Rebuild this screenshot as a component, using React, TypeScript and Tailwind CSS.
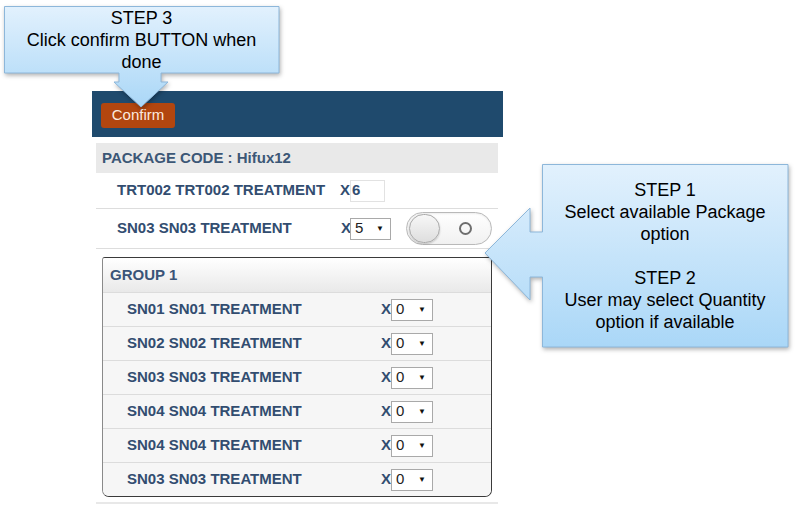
import React from "react";

const font = { fontFamily: '"Liberation Sans", Arial, sans-serif' };

function Select({ value, w }: { value: string; w: string }) {
  return (
    <div
      className={`flex h-[22px] items-center justify-between border border-[#a9a9a9] bg-white pl-[4px] pr-[6px] text-[15px] font-normal text-[#222] ${w}`}
    >
      <span>{value}</span>
      <span className="text-[8px] leading-none text-[#111]">▼</span>
    </div>
  );
}

function Toggle() {
  return (
    <div className="relative ml-[15px] flex h-[33px] w-[86px] items-center rounded-full border border-[#b9b9b9] bg-gradient-to-b from-[#ffffff] to-[#f1f1f1] shadow-[inset_0_1px_2px_rgba(0,0,0,0.08)]">
      <div className="ml-[2px] h-[29px] w-[31px] rounded-full border border-[#a8a8a8] bg-gradient-to-b from-[#f7f7f7] to-[#dedede] shadow-[0_1px_2px_rgba(0,0,0,0.2)]" />
      <div className="ml-[19px] h-[13px] w-[13px] rounded-full border-2 border-[#6e6e6e]" />
    </div>
  );
}

const groupRows = [
  "SN01 SN01 TREATMENT",
  "SN02 SN02 TREATMENT",
  "SN03 SN03 TREATMENT",
  "SN04 SN04 TREATMENT",
  "SN04 SN04 TREATMENT",
  "SN03 SN03 TREATMENT",
];

export default function App() {
  return (
    <div className="relative h-[509px] w-[798px] overflow-hidden bg-white" style={font}>
      <div className="pl-[92px] pt-[91px]">
        {/* header bar */}
        <div className="flex h-[46px] w-[411px] items-start bg-[#1f4a6d]">
          <div className="ml-[9px] mt-[12px] flex h-[25px] w-[74px] items-center justify-center rounded-[3px] bg-[#b2460f] text-[15px] text-[#fbeadf]">
            Confirm
          </div>
        </div>

        <div className="ml-[4px] w-[402px]">
          {/* package code */}
          <div className="mt-[6px] flex h-[30px] items-center bg-[#e9e9e9] pl-[6px] text-[15px] font-bold text-[#3c5776]">
            PACKAGE CODE : Hifux12
          </div>

          {/* TRT002 row */}
          <div className="flex h-[36px] items-center border-b border-[#dddddd] pl-[21px] text-[15px] font-bold text-[#324d70]">
            <span className="w-[223px]">TRT002 TRT002 TREATMENT</span>
            <span>X</span>
            <div className="flex h-[22px] w-[35px] items-center border border-[#e2e2e2] pl-[1px]">6</div>
          </div>

          {/* SN03 row */}
          <div className="flex h-[40px] items-center border-b border-[#dddddd] pl-[21px] text-[15px] font-bold text-[#324d70]">
            <span className="w-[224px]">SN03 SN03 TREATMENT</span>
            <span className="w-[9px]">X</span>
            <Select value="5" w="w-[41px]" />
            <Toggle />
          </div>

          {/* group */}
          <div className="ml-[6px] mt-[8px] w-[390px] overflow-hidden rounded-t-[3px] rounded-b-[7px] border border-[#3a3a3a] border-l-[#8a8a8a]">
            <div className="flex h-[34px] items-center bg-gradient-to-b from-[#ffffff] to-[#e9e9e9] pl-[7px] text-[15px] font-bold text-[#3a5478]">
              GROUP 1
            </div>
            {groupRows.map((r, i) => (
              <div
                key={i}
                className="flex h-[34px] items-center border-t border-[#dcdcdc] bg-[#f6f6f6] pl-[24px] text-[15px] font-bold text-[#324d70]"
              >
                <span className="w-[254px]">{r}</span>
                <span className="w-[10px]">X</span>
                <Select value="0" w="w-[42px]" />
              </div>
            ))}
          </div>

          <div className="mt-[5px] h-[2px] bg-[#e8e8e8]" />
        </div>
      </div>

      {/* STEP 3 callout */}
      <div className="absolute left-[4px] top-[6px] z-10 h-[104px] w-[280px]">
        <svg width="280" height="104" className="absolute left-0 top-0 drop-shadow-[1px_2px_2px_rgba(0,0,0,0.3)]">
          <defs>
            <linearGradient id="g3" x1="0" y1="0" x2="0" y2="1">
              <stop offset="0" stopColor="#e2f1fd" />
              <stop offset="1" stopColor="#aad7f7" />
            </linearGradient>
          </defs>
          <path
            d="M0.5,0.5 H275 V67 H157 V76 H164 L137,101 L110,76 H115 V67 H0.5 Z"
            fill="url(#g3)"
            stroke="#8db7da"
            strokeWidth="1"
          />
        </svg>
        <div className="relative flex h-[67px] w-[275px] flex-col items-center justify-center text-center text-[18px] leading-[22px] text-black">
          <div>STEP 3</div>
          <div>Click confirm BUTTON when</div>
          <div>done</div>
        </div>
      </div>

      {/* STEP 1/2 callout */}
      <div className="absolute left-[484px] top-[163px] z-10 h-[188px] w-[308px]">
        <svg width="308" height="188" className="absolute left-0 top-0 drop-shadow-[1px_2px_2px_rgba(0,0,0,0.3)]">
          <defs>
            <linearGradient id="g1" x1="0" y1="0" x2="0" y2="1">
              <stop offset="0" stopColor="#e2f1fd" />
              <stop offset="1" stopColor="#aad7f7" />
            </linearGradient>
          </defs>
          <path
            d="M58.5,1.5 H304 V184 H58.5 V114 H46 V137 L1,90 L46,45 V69 H58.5 Z"
            fill="url(#g1)"
            stroke="#8db7da"
            strokeWidth="1"
          />
        </svg>
        <div className="absolute left-[58px] top-[1px] flex h-[183px] w-[246px] flex-col items-center justify-center text-center text-[18px] leading-[22px] text-black">
          <div>STEP 1</div>
          <div>Select available Package</div>
          <div>option</div>
          <div>&nbsp;</div>
          <div>STEP 2</div>
          <div>User may select Quantity</div>
          <div>option if available</div>
        </div>
      </div>
    </div>
  );
}
